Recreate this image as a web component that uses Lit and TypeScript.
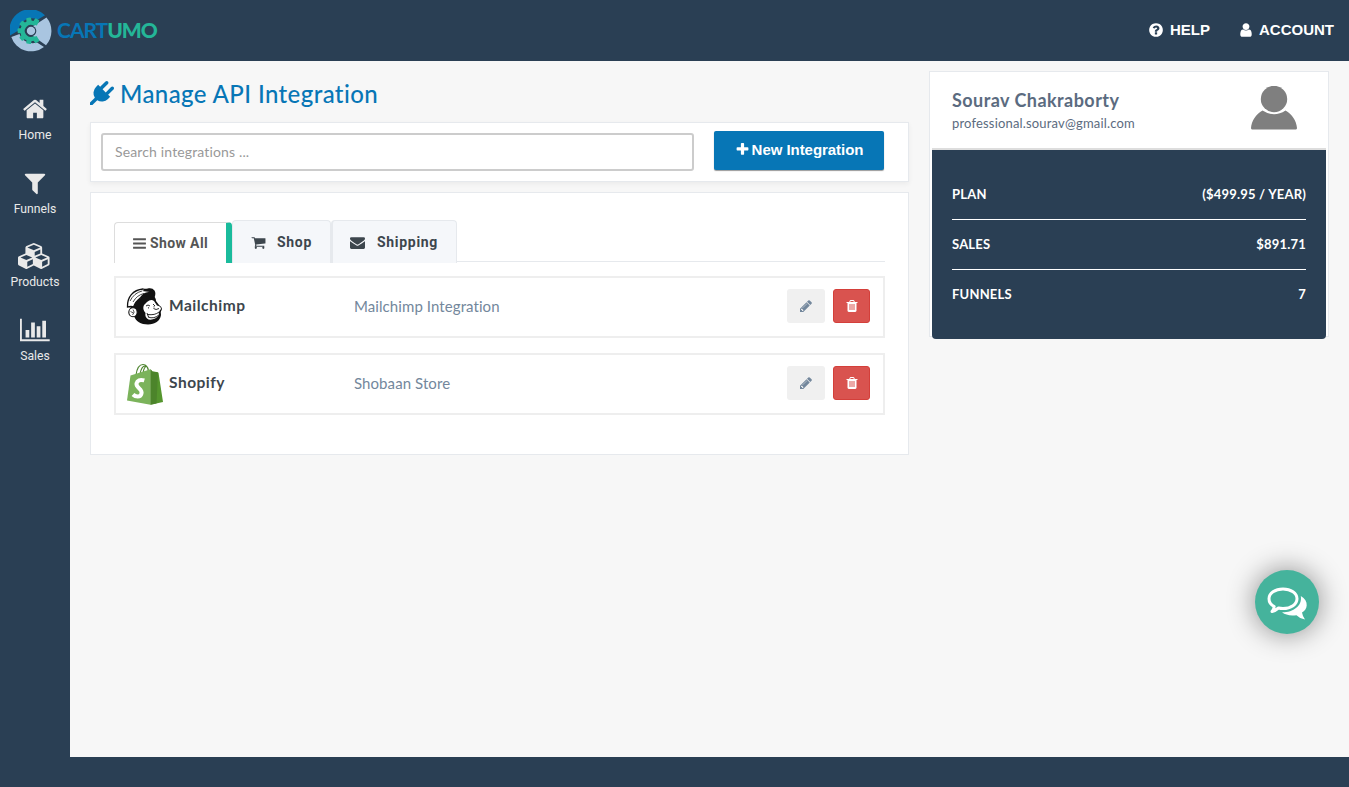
import { LitElement, html, css, svg } from "lit";
import { customElement } from "lit/decorators.js";

const ICONS: Record<string, { w: number; d: string }> = {
  home: { w: 1792, d: "M1472 992v480q0 26-19 45t-45 19h-384v-384h-256v384h-384q-26 0-45-19t-19-45v-480q0-1 .5-3t.5-3l575-474 575 474q1 2 1 6zm223-69l-62 74q-8 9-21 11h-3q-13 0-21-7l-692-577-692 577q-12 8-24 7-13-2-21-11l-62-74q-8-10-7-23.5t11-21.5l719-599q32-26 76-26t76 26l244 204v-195q0-14 9-23t23-9h192q14 0 23 9t9 23v408l219 182q10 8 11 21.5t-7 23.5z" },
  filter: { w: 1792, d: "M1595 295q17 41-14 70l-493 493v742q0 42-39 59-13 5-25 5-27 0-45-19l-256-256q-19-19-19-45v-486l-493-493q-31-29-14-70 17-39 59-39h1280q42 0 59 39z" },
  cubes: { w: 2304, d: "M640 1632l384-192v-314l-384 164v342zm-64-454l404-173-404-173-404 173zm1088 454l384-192v-314l-384 164v342zm-64-454l404-173-404-173-404 173zm-448-293l384-165v-266l-384 164v267zm-64-379l441-189-441-189-441 189zm1088 518v416q0 36-19 67t-52 47l-448 224q-25 14-57 14t-57-14l-448-224q-4-2-7-4-2 2-7 4l-448 224q-25 14-57 14t-57-14l-448-224q-33-16-52-47t-19-67v-416q0-38 21.5-70t56.5-48l434-186v-400q0-38 21.5-70t56.5-48l448-192q23-10 50-10t50 10l448 192q35 16 56.5 48t21.5 70v400l434 186q36 16 57 48t21 70z" },
  chart: { w: 2048, d: "M640 896v512h-256v-512h256zm384-512v1024h-256v-1024h256zm1024 1152v128h-2048v-1536h128v1408h1920zm-640-896v768h-256v-768h256zm384-384v1152h-256v-1152h256z" },
  plug: { w: 1792, d: "M1755 453q37 38 37 90.5t-37 90.5l-401 400 150 150-160 160q-163 163-389.5 186.5t-411.5-100.5l-362 362h-181v-181l362-362q-124-185-100.5-411.5t186.5-389.5l160-160 150 150 400-401q38-37 91-37t90 37 37 90.5-37 90.5l-400 401 234 234 401-400q38-37 91-37t90 37z" },
  plus: { w: 1792, d: "M1600 736v192q0 40-28 68t-68 28h-416v416q0 40-28 68t-68 28h-192q-40 0-68-28t-28-68v-416h-416q-40 0-68-28t-28-68v-192q0-40 28-68t68-28h416v-416q0-40 28-68t68-28h192q40 0 68 28t28 68v416h416q40 0 68 28t28 68z" },
  bars: { w: 1792, d: "M1664 1344v128q0 26-19 45t-45 19h-1408q-26 0-45-19t-19-45v-128q0-26 19-45t45-19h1408q26 0 45 19t19 45zm0-512v128q0 26-19 45t-45 19h-1408q-26 0-45-19t-19-45v-128q0-26 19-45t45-19h1408q26 0 45 19t19 45zm0-512v128q0 26-19 45t-45 19h-1408q-26 0-45-19t-19-45v-128q0-26 19-45t45-19h1408q26 0 45 19t19 45z" },
  cart: { w: 1792, d: "M704 1536q0 52-38 90t-90 38-90-38-38-90 38-90 90-38 90 38 38 90zm896 0q0 52-38 90t-90 38-90-38-38-90 38-90 90-38 90 38 38 90zm128-1088v512q0 24-16.5 42.5t-40.5 21.5l-1044 122q13 60 13 70 0 16-24 64h920q26 0 45 19t19 45-19 45-45 19h-1024q-26 0-45-19t-19-45q0-11 8-31.5t16-36 21.5-40 15.5-29.5l-177-823h-204q-26 0-45-19t-19-45 19-45 45-19h256q16 0 28.5 6.5t19.5 15.5 13 24.5 8 26 5.5 29.5 4.5 26h1201q26 0 45 19t19 45z" },
  envelope: { w: 1792, d: "M1792 710v794q0 66-47 113t-113 47h-1472q-66 0-113-47t-47-113v-794q44 49 101 87 362 246 497 345 57 42 92.5 65.5t94.5 48 110 24.5h2q51 0 110-24.5t94.5-48 92.5-65.5q170-123 498-345 57-39 100-87zm0-294q0 79-49 151t-122 123q-376 261-468 325-10 7-42.5 31t-54 38.5-52 32.5-57.5 27-50 9h-2q-23 0-50-9t-57.5-27-52-32.5-54-38.5-42.5-31q-91-64-262-182.5t-205-142.5q-62-42-117-115.5t-55-136.5q0-78 41.5-130t118.5-52h1472q65 0 112.5 47t47.5 113z" },
  pencil: { w: 1792, d: "M491 1536l91-91-235-235-91 91v107h128v128h107zm523-928q0-22-22-22-10 0-17 7l-542 542q-7 7-7 17 0 22 22 22 10 0 17-7l542-542q7-7 7-17zm-54-192l416 416-832 832h-416v-416zm683 96q0 53-37 90l-166 166-416-416 166-165q36-38 90-38 53 0 91 38l235 234q37 39 37 91z" },
  trash: { w: 1792, d: "M704 1376v-704q0-14-9-23t-23-9h-64q-14 0-23 9t-9 23v704q0 14 9 23t23 9h64q14 0 23-9t9-23zm256 0v-704q0-14-9-23t-23-9h-64q-14 0-23 9t-9 23v704q0 14 9 23t23 9h64q14 0 23-9t9-23zm256 0v-704q0-14-9-23t-23-9h-64q-14 0-23 9t-9 23v704q0 14 9 23t23 9h64q14 0 23-9t9-23zm-544-992h448l-48-117q-7-9-17-11h-317q-10 2-17 11zm928 32v64q0 14-9 23t-23 9h-96v948q0 83-47 143.5t-113 60.5h-832q-66 0-113-58.5t-47-141.5v-952h-96q-14 0-23-9t-9-23v-64q0-14 9-23t23-9h309l70-167q15-37 54-63t79-26h320q40 0 79 26t54 63l70 167h309q14 0 23 9t9 23z" },
  help: { w: 1792, d: "M1024 1376v-192q0-14-9-23t-23-9h-192q-14 0-23 9t-9 23v192q0 14 9 23t23 9h192q14 0 23-9t9-23zm256-672q0-88-55.5-163t-138.5-116-170-41q-243 0-371 213-15 24 8 42l132 100q7 6 19 6 16 0 25-12 53-68 86-92 34-24 86-24 48 0 85.5 26t37.5 59q0 38-20 61t-68 45q-63 28-115.5 86.5t-52.5 125.5v36q0 14 9 23t23 9h192q14 0 23-9t9-23q0-19 21.5-49.5t54.5-49.5q32-18 49-28.5t46-35 44.5-48 28-60.5 12.5-81zm384 192q0 209-103 385.5t-279.5 279.5-385.5 103-385.5-103-279.5-279.5-103-385.5 103-385.5 279.5-279.5 385.5-103 385.5 103 279.5 279.5 103 385.5z" },
  user: { w: 1792, d: "M1536 1399q0 109-62.5 187t-150.5 78h-854q-88 0-150.5-78t-62.5-187q0-85 8.5-160.5t31.5-152 58.5-131 94-89 134.5-34.5q131 128 313 128t313-128q76 0 134.5 34.5t94 89 58.5 131 31.5 152 8.5 160.5zm-256-887q0 159-112.5 271.5t-271.5 112.5-271.5-112.5-112.5-271.5 112.5-271.5 271.5-112.5 271.5 112.5 112.5 271.5z" },
};

/* Glyphs share a 1792-unit em, so height alone sets their size. */
const icon = (name: string, size: number) => {
  const g = ICONS[name];
  return html`<svg class="icon" width=${(size * g.w) / 1792} height=${size} viewBox="0 0 ${g.w} 1792"><path d=${g.d} /></svg>`;
};

const GEAR_TEETH = [70, 110, 150, 190, 230, 270, 310];

const brandMark = html`<svg width="42" height="42" viewBox="0 0 42 42">
  <path d="M0 25.500A21 21 0 0 1 35 5.200L27.500 9.700A13 13 0 0 0 8.500 20.500Z" fill="#0776b6" />
  <path d="M1.300 27A21 21 0 0 0 34 37L27 32.500A13.800 13.800 0 0 1 9.500 24Z" fill="#a9c5e0" />
  <path d="M36.500 7.600A21 21 0 0 1 36 35.200L22.500 25.800A5.500 5.500 0 0 0 22.500 16.500Z" fill="#a9c5e0" />
  <g fill="#24b698">
    ${GEAR_TEETH.map((a) => svg`<rect x="18.300" y="7.600" width="5" height="6" rx="1" transform="rotate(${a + 80} 20.800 20.800)" />`)}
  </g>
  <path d="M27 12.800A10.300 10.300 0 1 0 27 29L24 26A6 6 0 1 1 24 15.800Z" fill="#24b698" />
  <circle cx="21" cy="20.900" r="5.300" fill="#2a3f54" />
  <circle cx="21" cy="20.900" r="4.200" fill="#a9c5e0" />
</svg>`;

const mailchimp = html`<svg width="38" height="40" viewBox="0 0 38 40">
  <path d="M8 18C9.500 11 15 7 26 8C29 9 30 12 30 14L33 18Q36 20 36 22Q34 25 35 28C34 34 29 37.500 22 37.500C15 37.500 9.500 34 8 29C4 29 3 23 5 20Z" fill="#111" />
  <path d="M1.500 20C1 10 7 3 17 2Q20 3 23 2L26 8C17 7 10 13 7.500 20L5 19.500Z" fill="#fff" stroke="#111" stroke-width="1.300" />
  <path d="M4 14Q8 6 16 4M7 15Q11 8 18 6.500" fill="none" stroke="#111" stroke-width=".8" />
  <path d="M16 4Q25 -1 28.500 3.500Q30.500 7 28 11.500Q22 7 13.500 11Q18 4 24 5Z" fill="#111" />
  <path d="M21 15Q25 11.500 28 14Q30 17 31 18.500Q35 19 35 22Q32 25 33 28Q29 33.500 22.500 32.500Q18.500 30 19.500 26Q16 22 18 18Z" fill="#fff" />
  <path d="M20 19Q22 17 24 19M27 17L29 19M27.500 21.500Q30 23.500 33 21.500M21.500 27.500Q29 28.500 33 25M22 30Q28 32.500 33.500 27.500M21 26L22.500 30" fill="none" stroke="#111" stroke-width=".9" />
  <circle cx="22.500" cy="20.800" r=".6" fill="#111" /><circle cx="28" cy="19.800" r=".6" fill="#111" />
  <ellipse cx="7" cy="25.300" rx="4.200" ry="4.500" fill="#fff" stroke="#111" stroke-width="1.100" />
  <path d="M7 22.500Q9.500 25 6.500 28M4.500 24.500L7.500 26" fill="none" stroke="#111" stroke-width=".7" />
</svg>`;

const shopify = html`<svg width="38" height="42" viewBox="0 0 38 42">
  <path d="M10 12C11 5 14 1.500 17 1.500C20 1.500 22 4 22.500 9M14 11C15 6 17 3 19 3C22 3 22.500 6 22.500 9M17 10Q18 4 20.500 3" fill="none" stroke="#4f8530" stroke-width="1.200" />
  <path d="M4.500 12.500L24.500 6.200V41.700L1 37.500Z" fill="#7bb35b" />
  <path d="M24.500 6.200L26.500 8.500L31 9L32.500 9.800L37 39L24.500 41.700Z" fill="#55952e" />
  <path d="M24.500 6.200L26.500 8.500L32 9.500L30.500 40.400L24.500 41.700Z" fill="#4b812a" opacity=".85" />
  <path d="M18.300 17.400Q11.700 15.600 10.500 20.500C9.800 25 16.800 25.500 15.500 30.500C14.300 34.800 9.500 34 7 31.500" fill="none" stroke="#fff" stroke-width="4" />
</svg>`;

const avatar = html`<svg width="46" height="44" viewBox="0 0 46 44">
  <circle cx="23" cy="13" r="13.200" fill="#7f7f7f" />
  <path d="M11.500 24.500Q23 32 34.500 24.500C41 28 45.500 35 46 42Q46 43.400 45 43.400H1Q0 43.400 0 42C.5 35 5 28 11.500 24.500Z" fill="#7f7f7f" />
</svg>`;

const chat = html`<svg width="42" height="34" viewBox="0 0 42 34">
  <path d="M17 2C25 2 31 6.200 31 11.700S25 21.500 17 21.500Q14.500 21.500 12.500 21Q9.500 23.500 6 24.500Q8 22 8.200 19.500C5 17.800 3 15 3 11.700C3 6.200 9 2 17 2Z" fill="none" stroke="#fff" stroke-width="3" stroke-linejoin="round" />
  <path d="M34.800 9C39 11.500 41 14.500 40.700 18.500C40.500 22 38.500 24 36 25.500Q36.500 29 39 32.500Q33.500 31.500 30.500 28.200C24 29 19.500 28 16 25.300C27 25.500 36.500 19 34.800 9Z" fill="#fff" />
</svg>`;

@customElement("app-root")
export class AppRoot extends LitElement {
  private nav = [
    { icon: "home", label: "Home" },
    { icon: "filter", label: "Funnels" },
    { icon: "cubes", label: "Products" },
    { icon: "chart", label: "Sales" },
  ];
  private rows = [
    { logo: mailchimp, name: "Mailchimp", note: "Mailchimp Integration" },
    { logo: shopify, name: "Shopify", note: "Shobaan Store" },
  ];
  private stats = [
    ["PLAN", "($499.95 / YEAR)"],
    ["SALES", "$891.71"],
    ["FUNNELS", "7"],
  ];

  static styles = css`
    :host { display: grid; grid-template: 61px 1fr 30px / 70px 1fr; width: 100%; height: 100vh; background: #2a3f54; font-family: Lato, "Noto Sans", sans-serif; font-variant-ligatures: none; overflow: hidden; }
    * { box-sizing: border-box; }
    svg { display: block; flex: none; }
    .icon { fill: currentColor; overflow: visible; }
    header { grid-column: 1 / 3; display: flex; align-items: center; padding: 1px 15px 0 10px; color: #fff; }
    .word { margin-left: 5px; padding-bottom: 2px; font-size: 21px; font-weight: 700; line-height: 24px; letter-spacing: -1px; color: #0776b6; }
    .word b { color: #24b698; }
    .links { margin-left: auto; display: flex; gap: 28px; font: bold 15px/18px "Liberation Sans", Arial, sans-serif; }
    .link { display: flex; align-items: center; gap: 6px; padding-bottom: 3px; }
    .link + .link { gap: 5px; }
    aside { padding-top: 35px; display: flex; flex-direction: column; color: #e9e9e9; font: 12.200px/16px Roboto, sans-serif; }
    .nav { height: 73.700px; display: flex; flex-direction: column; align-items: center; gap: 5px; }
    main { background: #f7f7f7; padding: 10px 20px; display: grid; grid-template-columns: 819px 400px; gap: 20px; align-items: start; }
    h1 { margin: 0; height: 51px; padding-top: 8px; display: flex; gap: 6px; font-size: 24px; line-height: 30px; font-weight: 500; letter-spacing: .4px; color: #0776b6; }
    h1 .icon { margin-top: 2px; }
    .box { background: #fff; border: 1px solid #e6e9ed; }
    .search { height: 60px; padding: 8px 24px 0 10px; display: flex; justify-content: space-between; box-shadow: 0 2px 5px rgba(0,0,0,.05); }
    .field { width: 593px; height: 38px; margin-top: 2px; border: 2px solid #ccc; border-radius: 3px; padding: 0 12px; font-size: 14px; line-height: 34px; letter-spacing: .14px; color: #999; }
    .new { width: 170px; height: 39px; padding-bottom: 2px; border-radius: 2px; background: #0776b6; box-shadow: 0 1px 1px #999; color: #fff; display: flex; align-items: center; justify-content: center; gap: 2px; font: bold 15px/18px "Liberation Sans", Arial, sans-serif; letter-spacing: -.05px; }
    .list { margin-top: 10px; height: 263px; padding: 27px 23px 0; }
    .tabs { display: flex; align-items: flex-end; height: 43px; background: linear-gradient(#e6e9ed, #e6e9ed) 0 41px / 100% 1px no-repeat; font: bold 14px/18px Roboto, sans-serif; letter-spacing: .7px; color: #3d464d; }
    .tab { height: 43px; background: #f5f7fa; border: 1px solid #e6e9ed; border-bottom: 0; border-radius: 4px 4px 0 0; display: flex; align-items: center; padding: 0 18px; }
    .shop { width: 99px; gap: 11px; }
    .ship { width: 126px; padding-left: 17px; gap: 12px; border-left-width: 2px; }
    .all { width: 118px; height: 41px; padding: 0 0 0 17px; gap: 3px; letter-spacing: .4px; background: #fff; border-color: #ddd; border-right: 6px solid #1abb9c; color: #555; }
    .row { height: 62px; margin-top: 15px; border: 2px solid #eee; padding: 0 13px 0 10px; display: grid; grid-template-columns: 43px 185px 1fr 38px 45px; align-items: center; }
    .tabs + .row { margin-top: 13px; }
    .name { font-weight: 700; font-size: 15.500px; line-height: 20px; letter-spacing: .5px; color: #3d464d; padding-bottom: 4px; }
    .note { font-size: 15px; line-height: 20px; letter-spacing: .08px; color: #73879c; padding-bottom: 2px; }
    .btn { height: 34px; margin-bottom: 2px; border-radius: 3px; display: flex; align-items: center; justify-content: center; }
    .edit { background: #f0f0f0; color: #73879c; width: 38px; }
    .del { background: #d9534f; border: 1px solid #d43f3a; color: #fff; width: 37px; margin-left: 8px; }
    .card { height: 266px; padding: 0 2px; }
    .who { height: 78px; border-bottom: 2px solid #ddd; display: flex; justify-content: space-between; padding: 14px 29px 0 20px; color: #5b6b80; }
    .person { font-size: 18px; font-weight: 700; line-height: 28px; letter-spacing: .45px; }
    .mail { font-size: 13px; line-height: 18px; letter-spacing: .17px; }
    .stats { height: 189px; background: #2a3f54; border-radius: 0 0 4px 4px; padding: 19px 20px 0; color: #fff; font-size: 13px; font-weight: 700; letter-spacing: .2px; }
    .stat { display: flex; justify-content: space-between; height: 50px; line-height: 50px; }
    .stat + .stat { border-top: 1px solid #fff; line-height: 48px; }
    .chat { position: fixed; left: 1255px; top: 570px; width: 64px; height: 64px; padding-top: 3px; border-radius: 50%; background: #45b39c; box-shadow: 0 0 28px rgba(0,0,0,.45); display: flex; align-items: center; justify-content: center; }
  `;

  render() {
    return html`
      <header>
        ${brandMark}
        <span class="word">CART<b>UMO</b></span>
        <nav class="links">
          <span class="link">${icon("help", 16)}<span>HELP</span></span>
          <span class="link">${icon("user", 16)}<span>ACCOUNT</span></span>
        </nav>
      </header>
      <aside>${this.nav.map((n) => html`<div class="nav">${icon(n.icon, 26)}<span>${n.label}</span></div>`)}</aside>
      <main>
        <section>
          <h1>${icon("plug", 24)}<span>Manage API Integration</span></h1>
          <div class="box search">
            <div class="field">Search integrations ...</div>
            <div class="new">${icon("plus", 15)}<span>New Integration</span></div>
          </div>
          <div class="box list">
            <div class="tabs">
              <div class="tab all">${icon("bars", 15)}<span>Show All</span></div>
              <div class="tab shop">${icon("cart", 15)}<span>Shop</span></div>
              <div class="tab ship">${icon("envelope", 15)}<span>Shipping</span></div>
            </div>
            ${this.rows.map((r) => html`<div class="row">${r.logo}<div class="name">${r.name}</div><div class="note">${r.note}</div>
              <div class="btn edit">${icon("pencil", 14)}</div><div class="btn del">${icon("trash", 14)}</div></div>`)}
          </div>
        </section>
        <section class="box card">
          <div class="who">
            <div><div class="person">Sourav Chakraborty</div><div class="mail">professional.sourav@gmail.com</div></div>
            ${avatar}
          </div>
          <div class="stats">${this.stats.map(([k, v]) => html`<div class="stat"><span>${k}</span><span>${v}</span></div>`)}</div>
        </section>
      </main>
      <div class="chat">${chat}</div>
    `;
  }
}
